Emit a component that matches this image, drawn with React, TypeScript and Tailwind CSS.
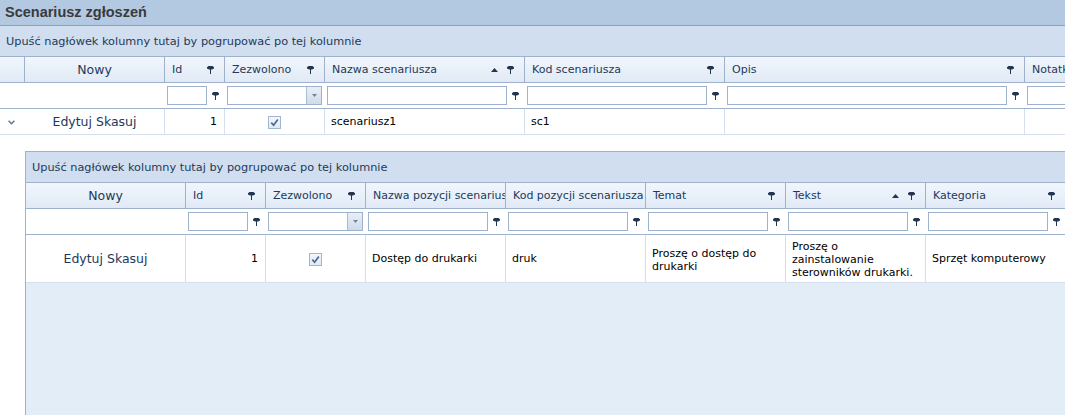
import React from "react";

type Col = {
  title: string;
  w: string;
  center?: boolean;
  sort?: boolean;
  icon?: boolean;
  combo?: boolean;
  noFilter?: boolean;
};

const mainCols: Col[] = [
  { title: "Nowy", w: "w-[140px]", center: true, noFilter: true },
  { title: "Id", w: "w-[60px]", icon: true },
  { title: "Zezwolono", w: "w-[100px]", icon: true, combo: true },
  { title: "Nazwa scenariusza", w: "w-[200px]", icon: true, sort: true },
  { title: "Kod scenariusza", w: "w-[200px]", icon: true },
  { title: "Opis", w: "w-[300px]", icon: true },
  { title: "Notatki", w: "w-[200px]", icon: true },
];

const detailCols: Col[] = [
  { title: "Nowy", w: "w-[160px]", center: true, noFilter: true },
  { title: "Id", w: "w-[80px]", icon: true },
  { title: "Zezwolono", w: "w-[100px]", icon: true, combo: true },
  { title: "Nazwa pozycji scenariusza", w: "w-[140px]" },
  { title: "Kod pozycji scenariusza", w: "w-[140px]" },
  { title: "Temat", w: "w-[140px]", icon: true },
  { title: "Tekst", w: "w-[140px]", icon: true, sort: true },
  { title: "Kategoria", w: "w-[140px]", icon: true },
];

const FilterIcon = () => (
  <svg width="7" height="8" viewBox="0 0 7 8" className="shrink-0">
    <path d="M1.5 0H5.5L7 1.2V2.6L5 3.6H4V8H3V3.6H2L0 2.6V1.2Z" fill="#22344f" />
  </svg>
);

const SortUp = () => (
  <svg width="7" height="4" viewBox="0 0 7 4" className="shrink-0 mr-[9px]">
    <path d="M0 4H7L3.5 0Z" fill="#22344f" />
  </svg>
);

const Check = () => (
  <span className="w-[13px] h-[13px] border border-[#a3b6d1] bg-linear-to-b from-[#f3f6fb] to-[#e1e9f4] flex items-center justify-center">
    <svg width="9" height="9" viewBox="0 0 9 9">
      <path d="M1.3 4.6L3.6 7.2L7.8 1.4" stroke="#4a6893" strokeWidth="1.7" fill="none" />
    </svg>
  </span>
);

const Chevron = () => (
  <svg width="7" height="5" viewBox="0 0 7 5">
    <path d="M0.6 0.8L3.5 3.7L6.4 0.8" stroke="#5f7393" strokeWidth="1.5" fill="none" />
  </svg>
);

const HeaderRow = ({ cols, lead }: { cols: Col[]; lead?: boolean }) => (
  <div className="flex h-[26px] shrink-0 border-b border-[#9fb2cb] bg-linear-to-b from-[#f1f6fc] to-[#e0eaf6]">
    {lead && <div className="w-[25px] shrink-0 border-r border-[#9fb2cb]" />}
    {cols.map((c) => (
      <div
        key={c.title}
        className={`${c.w} shrink-0 flex items-center border-r border-[#9fb2cb] overflow-hidden whitespace-nowrap text-[#1e395b] ${
          c.center ? "justify-center text-[12.5px] pt-[2px]" : "pl-[7px] pr-[10px] pt-[1px]"
        }`}
      >
        <span className={c.center ? "" : "flex-1"}>{c.title}</span>
        {c.sort && <SortUp />}
        {c.icon && <FilterIcon />}
      </div>
    ))}
  </div>
);

const FilterRow = ({ cols, lead }: { cols: Col[]; lead?: boolean }) => (
  <div className="flex h-[26px] shrink-0 border-b border-[#9fb2cb] bg-white">
    {lead && <div className="w-[25px] shrink-0" />}
    {cols.map((c) => (
      <div key={c.title} className={`${c.w} shrink-0 flex items-center pl-[2px] border-r border-transparent`}>
        {c.noFilter ? null : c.combo ? (
          <div className="w-[95px] h-[19px] flex border border-[#9fb2cb] bg-white">
            <div className="flex-1" />
            <div className="w-[15px] border-l border-[#a9bbd2] bg-linear-to-b from-[#e9eff7] to-[#cfdbea] flex items-center justify-center">
              <svg width="5" height="3" viewBox="0 0 5 3">
                <path d="M0 0H5L2.5 3Z" fill="#6e819d" />
              </svg>
            </div>
          </div>
        ) : (
          <>
            <div className="flex-1 h-[19px] border border-[#9fb2cb] bg-white" />
            <div className="w-[17px] flex justify-center">
              <FilterIcon />
            </div>
          </>
        )}
      </div>
    ))}
  </div>
);

const GroupPanel = () => (
  <div className="h-[31px] shrink-0 flex items-center pl-[6px] pt-[2px] bg-[#d0deef] border-b border-[#9fb2cb] text-[#1e395b] text-[11.3px] whitespace-nowrap">
    Upuść nagłówek kolumny tutaj by pogrupować po tej kolumnie
  </div>
);

const cellLine = "shrink-0 border-r border-[#d5dfee] flex items-center pt-[2px]";

export default function App() {
  return (
    <div className="w-[1065px] h-[415px] overflow-hidden bg-white flex flex-col font-['DejaVu_Sans',Verdana,sans-serif] text-[11px]">
      <div className="h-[26px] shrink-0 flex items-center pl-[5px] bg-[#b3c8e1] border-b border-[#8a9fbc] text-[14.5px] font-bold text-[#3a3a3a] font-['Liberation_Sans',Arial,sans-serif]">
        Scenariusz zgłoszeń
      </div>
      <GroupPanel />
      <HeaderRow cols={mainCols} lead />
      <FilterRow cols={mainCols} lead />

      {/* master row */}
      <div className="flex h-[26px] shrink-0 border-b border-[#d5dfee] text-black">
        <div className="w-[25px] shrink-0 flex items-center justify-center pr-[2px] pt-[2px]">
          <Chevron />
        </div>
        <div className={`w-[140px] ${cellLine} justify-center text-[#1e395b] text-[12.5px]`}>Edytuj Skasuj</div>
        <div className={`w-[60px] ${cellLine} justify-end pr-[7px]`}>1</div>
        <div className={`w-[100px] ${cellLine} justify-center`}>
          <Check />
        </div>
        <div className={`w-[200px] ${cellLine} pl-[6px]`}>scenariusz1</div>
        <div className={`w-[200px] ${cellLine} pl-[6px]`}>sc1</div>
        <div className={`w-[300px] ${cellLine}`} />
        <div className={`w-[200px] ${cellLine}`} />
      </div>

      {/* detail row */}
      <div className="flex-1 flex min-h-0">
        <div className="w-[25px] shrink-0" />
        <div className="flex-1 pt-[16px] flex flex-col min-w-0">
          <div className="flex-1 flex flex-col border-l border-t border-[#9fb2cb] bg-[#e3edf8] overflow-hidden">
            <GroupPanel />
            <HeaderRow cols={detailCols} />
            <FilterRow cols={detailCols} />
            <div className="flex h-[48px] shrink-0 border-b border-[#d5dfee] bg-white text-black">
              <div className={`w-[160px] ${cellLine} justify-center text-[#1e395b] text-[12.5px]`}>Edytuj Skasuj</div>
              <div className={`w-[80px] ${cellLine} justify-end pr-[7px]`}>1</div>
              <div className={`w-[100px] ${cellLine} justify-center`}>
                <Check />
              </div>
              <div className={`w-[140px] ${cellLine} pl-[6px]`}>Dostęp do drukarki</div>
              <div className={`w-[140px] ${cellLine} pl-[6px]`}>druk</div>
              <div className={`w-[140px] ${cellLine} pl-[6px] leading-[13px]`}>
                <span>
                  Proszę o dostęp do
                  <br />
                  drukarki
                </span>
              </div>
              <div className={`w-[140px] ${cellLine} pl-[6px] leading-[13px] whitespace-nowrap`}>
                <span>
                  Proszę o
                  <br />
                  zainstalowanie
                  <br />
                  sterowników drukarki.
                </span>
              </div>
              <div className={`w-[140px] ${cellLine} pl-[6px]`}>Sprzęt komputerowy</div>
            </div>
          </div>
        </div>
      </div>
    </div>
  );
}
